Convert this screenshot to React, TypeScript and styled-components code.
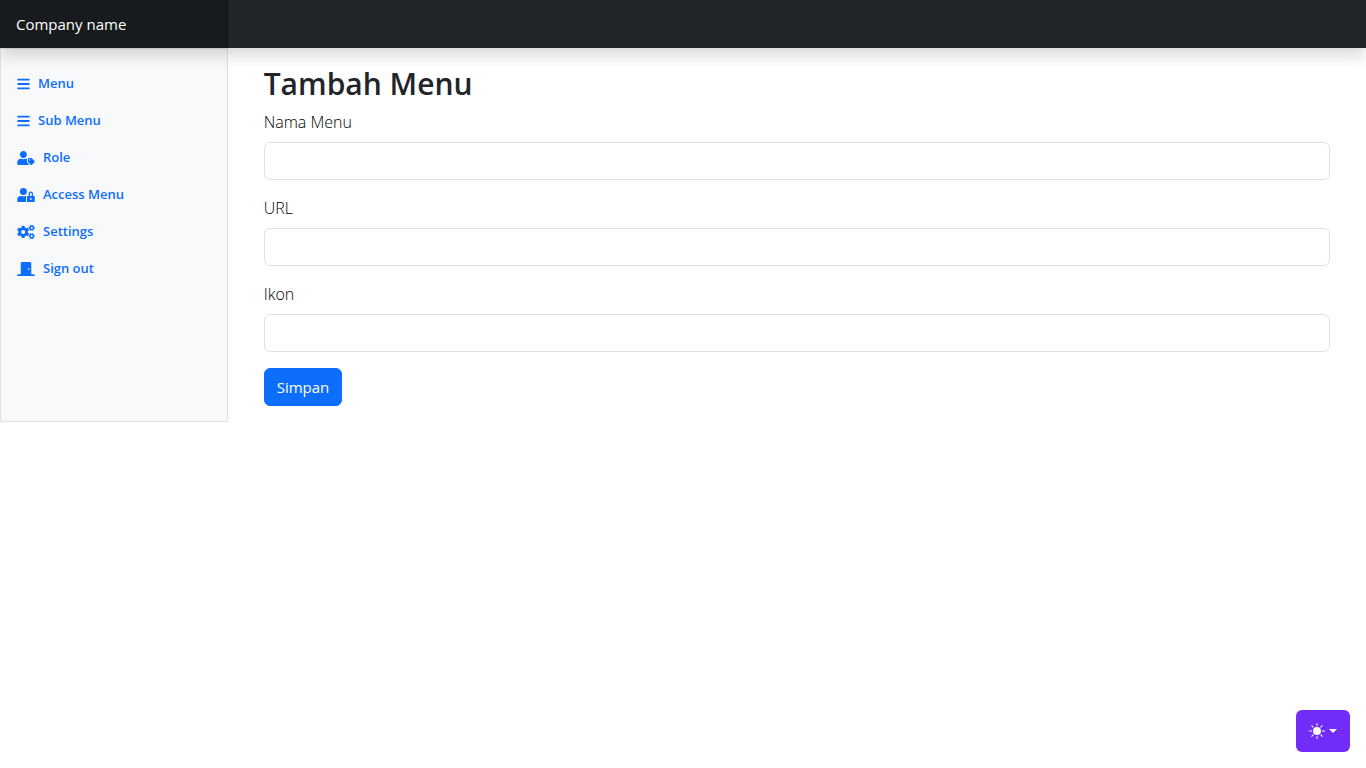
import React from "react";
import styled, { createGlobalStyle } from "styled-components";
import type { IconType } from "react-icons";
import { FaBars, FaCogs, FaDoorClosed, FaUserLock, FaUserTag } from "react-icons/fa";
import { BsSunFill } from "react-icons/bs";

const GlobalStyle = createGlobalStyle`
  *, *::before, *::after { box-sizing: border-box; }
  body {
    margin: 0;
    background: #fff;
    color: #212529;
    font-family: "Segoe UI", "Open Sans", "Noto Sans", sans-serif;
    font-size: 16px;
    line-height: 24px;
  }
`;

const Header = styled.header`
  position: sticky;
  top: 0;
  z-index: 10;
  display: flex;
  height: 48px;
  background: #212529;
  box-shadow: 0 8px 16px rgba(0, 0, 0, 0.15);
`;

const Brand = styled.a`
  width: 16.6667%;
  padding: 12px 16px;
  background: rgba(0, 0, 0, 0.25);
  box-shadow: inset -1px 0 0 rgba(0, 0, 0, 0.25);
  color: #fff;
  font-size: 15px;
  text-decoration: none;
`;

const Layout = styled.div`
  display: flex;
`;

const Sidebar = styled.nav`
  width: 16.6667%;
  flex: none;
  padding: 16px 0;
  border: 1px solid #dee2e6;
  background: #f8f9fa;
`;

const NavList = styled.ul`
  margin: 0;
  padding: 0;
  list-style: none;
`;

const NavLink = styled.a`
  display: flex;
  align-items: center;
  gap: 8px;
  padding: 8px 16px;
  color: #0d6efd;
  font-size: 13px;
  font-weight: 600;
  line-height: 21px;
  text-decoration: none;
`;

const NavIcon = styled.span<{ $narrow?: boolean }>`
  display: flex;
  width: ${({ $narrow }) => ($narrow ? 13 : 18)}px;

  svg {
    width: 100%;
    height: 14px;
  }
`;

const Main = styled.main`
  flex: 1;
  min-width: 0;
  padding: 16px 36px;
`;

const Title = styled.h1`
  margin: 0 0 6px;
  font-size: 30px;
  font-weight: 600;
  line-height: 40px;
`;

const Field = styled.div`
  margin-bottom: 16px;
`;

const Label = styled.label`
  display: block;
  width: fit-content;
  margin-bottom: 8px;
  color: #000;
  font-size: 16px;
  font-weight: 300;
`;

const Input = styled.input`
  display: block;
  width: 100%;
  height: 38px;
  padding: 6px 12px;
  border: 1px solid #dee2e6;
  border-radius: 6px;
  background: #fff;
  color: inherit;
  font: inherit;
`;

const SubmitButton = styled.button`
  display: block;
  height: 38px;
  padding: 6px 12px;
  border: 1px solid #0d6efd;
  border-radius: 6px;
  background: #0d6efd;
  color: #fff;
  font: inherit;
  font-size: 15px;
`;

const ThemeButton = styled.button`
  position: fixed;
  right: 16px;
  bottom: 16px;
  display: flex;
  align-items: center;
  gap: 4px;
  height: 42px;
  padding: 0 13px;
  border: 0;
  border-radius: 6px;
  background: #712cf9;
  color: #fff;

  svg {
    width: 16px;
    height: 16px;
  }
`;

const Caret = styled.span`
  border-top: 4px solid;
  border-right: 4px solid transparent;
  border-left: 4px solid transparent;
`;

const links: { label: string; icon: IconType; narrow?: boolean }[] = [
  { label: "Menu", icon: FaBars, narrow: true },
  { label: "Sub Menu", icon: FaBars, narrow: true },
  { label: "Role", icon: FaUserTag },
  { label: "Access Menu", icon: FaUserLock },
  { label: "Settings", icon: FaCogs },
  { label: "Sign out", icon: FaDoorClosed },
];

const fields = [
  { id: "menu", label: "Nama Menu" },
  { id: "url", label: "URL" },
  { id: "icon", label: "Ikon" },
];

export default function App() {
  return (
    <>
      <GlobalStyle />
      <Header>
        <Brand href="#">Company name</Brand>
      </Header>
      <Layout>
        <Sidebar>
          <NavList>
            {links.map(({ label, icon: Icon, narrow }) => (
              <li key={label}>
                <NavLink href="#">
                  <NavIcon $narrow={narrow}>
                    <Icon aria-hidden />
                  </NavIcon>
                  {label}
                </NavLink>
              </li>
            ))}
          </NavList>
        </Sidebar>
        <Main>
          <Title>Tambah Menu</Title>
          <form onSubmit={(event) => event.preventDefault()}>
            {fields.map(({ id, label }) => (
              <Field key={id}>
                <Label htmlFor={id}>{label}</Label>
                <Input id={id} name={id} type="text" />
              </Field>
            ))}
            <SubmitButton type="submit">Simpan</SubmitButton>
          </form>
        </Main>
      </Layout>
      <ThemeButton type="button" aria-label="Toggle theme">
        <BsSunFill aria-hidden />
        <Caret />
      </ThemeButton>
    </>
  );
}
